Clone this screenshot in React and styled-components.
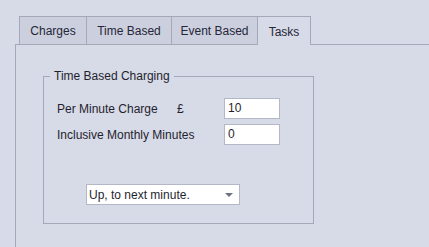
import React from 'react'
import styled, { createGlobalStyle } from 'styled-components'

const GlobalStyle = createGlobalStyle`
  html, body {
    margin: 0;
    padding: 0;
    background: #d7dae7;
    font-family: "Liberation Sans", Arial, sans-serif;
    font-size: 12px;
    color: #1f1f2e;
    overflow: hidden;
  }
`

const Page = styled.div`
  width: 429px;
  height: 247px;
  padding: 16px 0 0 15px;
  box-sizing: border-box;
  display: flex;
  flex-direction: column;
`

const TabStrip = styled.div`
  display: flex;
  margin-left: 4px;
  position: relative;
  z-index: 1;
`

const Tab = styled.div`
  width: ${(p) => p.w}px;
  height: ${(p) => (p.active ? 29 : 28)}px;
  margin-bottom: ${(p) => (p.active ? -1 : 0)}px;
  box-sizing: border-box;
  border-top: 1px solid #a4a9ba;
  border-left: 1px solid #a4a9ba;
  border-right: ${(p) => (p.last ? '1px solid #a4a9ba' : 'none')};
  background: ${(p) => (p.active ? '#d7dae7' : '#ccd0de')};
  display: flex;
  align-items: center;
  justify-content: center;
  padding-top: ${(p) => (p.active ? 2 : 0)}px;
  color: #262638;
`

const Panel = styled.div`
  flex: 1;
  border-top: 1px solid #a4a9ba;
  border-left: 1px solid #a4a9ba;
  padding: 23px 0 0 27px;
`

const Group = styled.fieldset`
  margin: 0;
  width: 271px;
  height: 156px;
  box-sizing: border-box;
  border: 1px solid #a4a9ba;
  padding: 0 0 0 6px;
`

const Legend = styled.legend`
  padding: 0 4px;
  line-height: 16px;
`

const Rows = styled.div`
  display: flex;
  flex-direction: column;
  gap: 5px;
  padding: 14px 0 0 7px;
`

const Row = styled.div`
  display: flex;
  align-items: center;
  height: 21px;
`

const Label = styled.span`
  width: ${(p) => p.w}px;
`

const Field = styled.div`
  width: 56px;
  height: 21px;
  box-sizing: border-box;
  border: 1px solid #b4b8c6;
  background: #fff;
  padding: 1px 0 0 3px;
  line-height: 17px;
`

const Select = styled.div`
  margin: 39px 0 0 36px;
  width: 154px;
  height: 21px;
  box-sizing: border-box;
  border: 1px solid #b4b8c6;
  background: #fff;
  display: flex;
  align-items: center;
  justify-content: space-between;
  padding: 0 6px 0 2px;
`

const Arrow = styled.span`
  width: 0;
  height: 0;
  border-left: 4px solid transparent;
  border-right: 4px solid transparent;
  border-top: 4px solid #6e7384;
  margin-top: 1px;
`

const tabs = [
  { name: 'Charges', w: 67 },
  { name: 'Time Based', w: 85 },
  { name: 'Event Based', w: 86 },
  { name: 'Tasks', w: 54, active: true, last: true },
]

export default function App() {
  return (
    <Page>
      <GlobalStyle />
      <TabStrip>
        {tabs.map((t) => (
          <Tab key={t.name} w={t.w} active={t.active} last={t.last}>
            {t.name}
          </Tab>
        ))}
      </TabStrip>
      <Panel>
        <Group>
          <Legend>Time Based Charging</Legend>
          <Rows>
            <Row>
              <Label w={120}>Per Minute Charge</Label>
              <Label w={47}>£</Label>
              <Field>10</Field>
            </Row>
            <Row>
              <Label w={167}>Inclusive Monthly Minutes</Label>
              <Field>0</Field>
            </Row>
          </Rows>
          <Select>
            <span>Up, to next minute.</span>
            <Arrow />
          </Select>
        </Group>
      </Panel>
    </Page>
  )
}
